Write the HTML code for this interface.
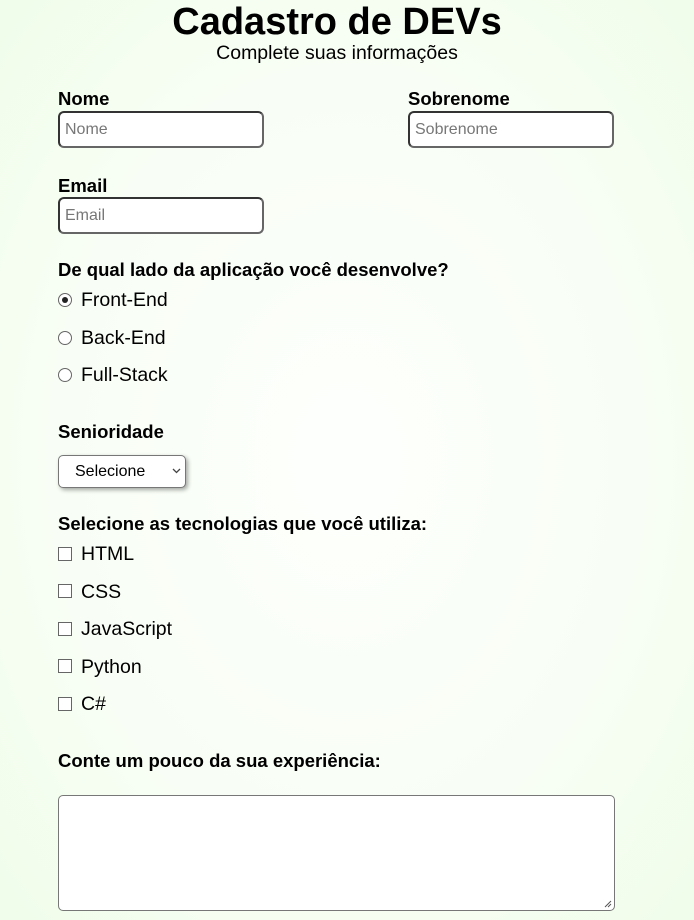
<!DOCTYPE html>
<html><head><meta charset="utf-8"><style>
body{margin:0;width:694px;height:920px;overflow:hidden;background:radial-gradient(ellipse at 50% 50%,#fdfffc 0%,#f8fef5 60%,#f0fdea 100%);font-family:"Liberation Sans",sans-serif;color:#000;position:relative}
.a{position:absolute;white-space:nowrap}
h1{position:absolute;margin:0;left:0;width:674px;text-align:center;top:0px;font-size:38px;line-height:44px;font-weight:bold}
.sub{left:0;width:674px;text-align:center;top:42px;font-size:19.5px;line-height:22px}
.lb{font-size:18.5px;font-weight:bold;line-height:20px}
.in{position:absolute;box-sizing:border-box;width:206px;height:37px;border:2px solid #333;border-right-color:#666;border-bottom-color:#666;border-radius:6px;background:#fff;font-size:16px;color:#777;padding:8px 5px;line-height:17px}
.t{font-size:19.5px;line-height:20px;left:81px}
.rd{position:absolute;left:58px;width:12px;height:12px;border:1px solid #666;border-radius:50%;background:#fff}
.cb{position:absolute;left:58px;width:12px;height:12px;border:1.5px solid #666;background:#fff}
</style></head><body>
<h1>Cadastro de DEVs</h1>
<div class="a sub">Complete suas informações</div>
<div class="a lb" style="left:58px;top:89px">Nome</div>
<div class="a lb" style="left:408px;top:89px">Sobrenome</div>
<div class="in" style="left:58px;top:111px">Nome</div>
<div class="in" style="left:408px;top:111px">Sobrenome</div>
<div class="a lb" style="left:58px;top:176px">Email</div>
<div class="in" style="left:58px;top:197px;width:206px">Email</div>
<div class="a lb" style="left:58px;top:260px">De qual lado da aplicação você desenvolve?</div>
<div class="rd" style="top:293px"><div style="position:absolute;left:3px;top:3px;width:6px;height:6px;border-radius:50%;background:#222"></div></div>
<div class="a t" style="top:290px">Front-End</div>
<div class="rd" style="top:331px"></div>
<div class="a t" style="top:328px">Back-End</div>
<div class="rd" style="top:368px"></div>
<div class="a t" style="top:365px">Full-Stack</div>
<div class="a lb" style="left:58px;top:422px">Senioridade</div>
<div style="position:absolute;left:58px;top:455px;width:126px;height:31px;border:1px solid #777;border-radius:5px;background:#fff;box-shadow:2px 2px 4px rgba(0,0,0,.35)">
<span class="a" style="left:16px;top:7px;font-size:16px;line-height:18px">Selecione</span>
<svg style="position:absolute;left:113px;top:12px" width="9" height="6" viewBox="0 0 9 6"><path d="M1 1l3.5 3.5L8 1" stroke="#444" stroke-width="1.3" fill="none"/></svg>
</div>
<div class="a lb" style="left:58px;top:514px">Selecione as tecnologias que você utiliza:</div>
<div class="cb" style="top:547px"></div><div class="a t" style="top:544px">HTML</div>
<div class="cb" style="top:584px"></div><div class="a t" style="top:582px">CSS</div>
<div class="cb" style="top:622px"></div><div class="a t" style="top:619px">JavaScript</div>
<div class="cb" style="top:659px"></div><div class="a t" style="top:657px">Python</div>
<div class="cb" style="top:697px"></div><div class="a t" style="top:694px">C#</div>
<div class="a lb" style="left:58px;top:751px">Conte um pouco da sua experiência:</div>
<div style="position:absolute;left:58px;top:795px;width:555px;height:114px;border:1px solid #777;border-radius:5px;background:#fff">
<svg style="position:absolute;right:2px;bottom:2px" width="8" height="8" viewBox="0 0 8 8"><path d="M7 1L1 7M7 4L4 7" stroke="#555" stroke-width="1"/></svg>
</div>
</body></html>
